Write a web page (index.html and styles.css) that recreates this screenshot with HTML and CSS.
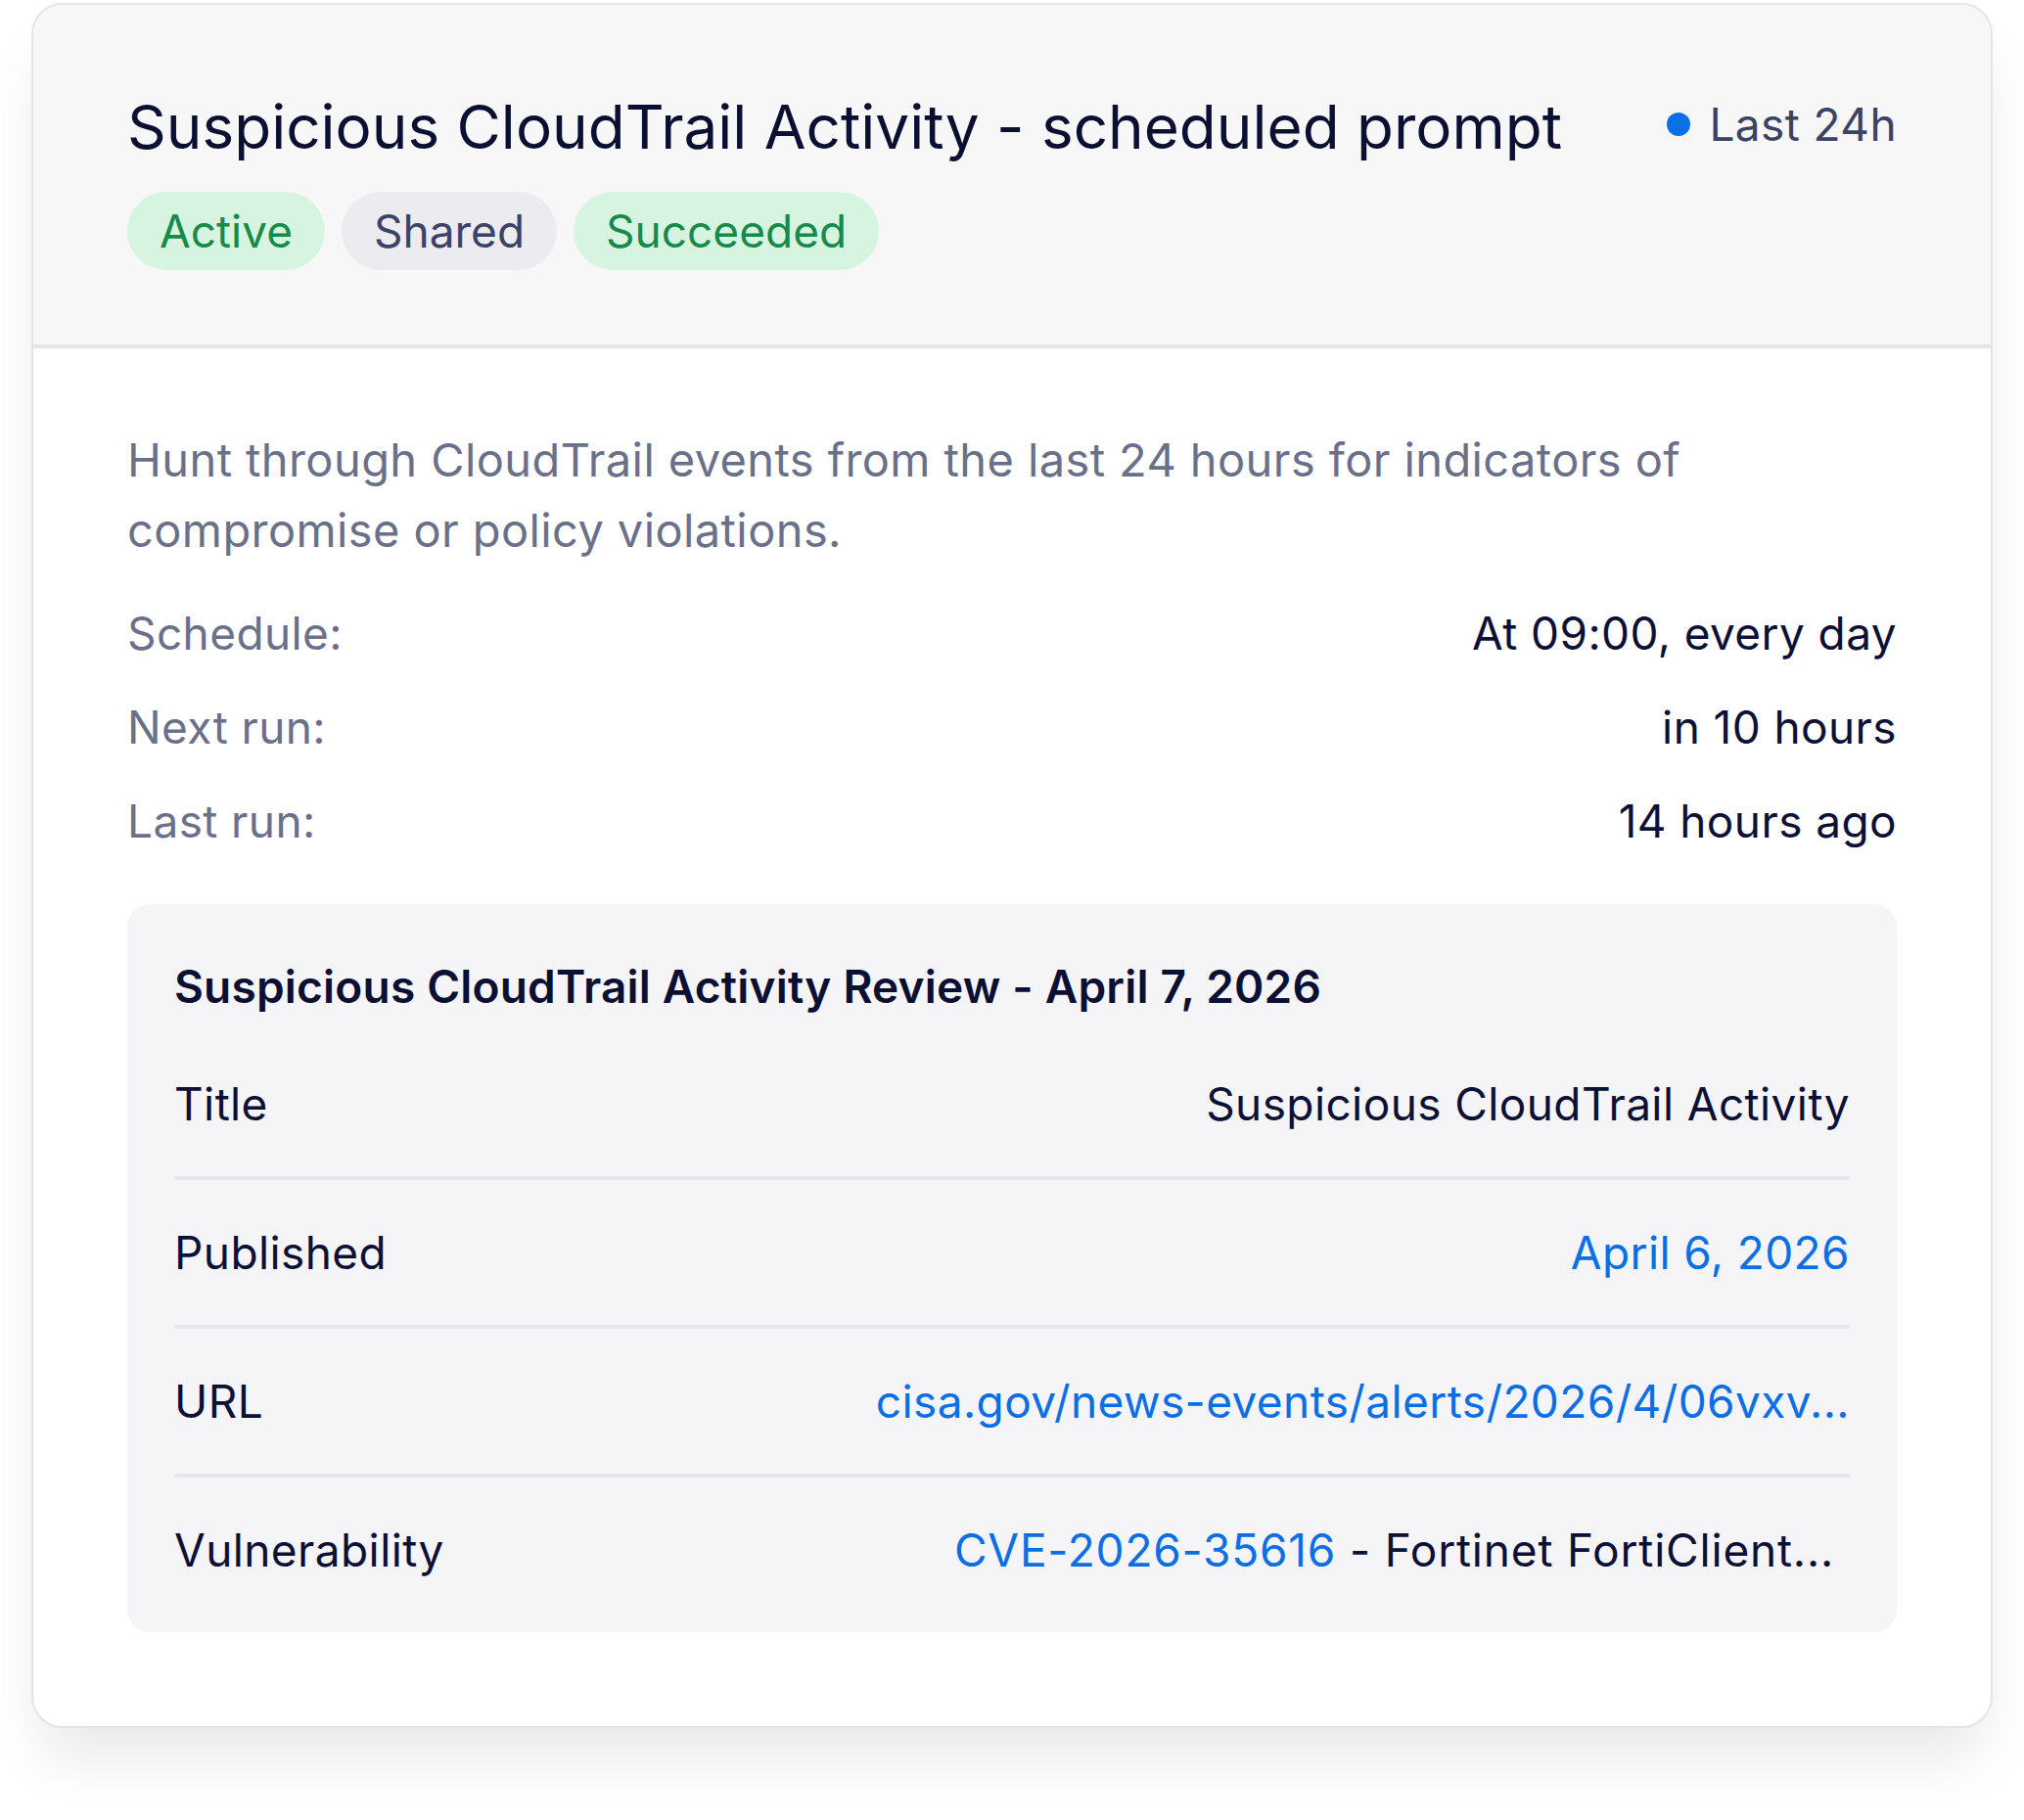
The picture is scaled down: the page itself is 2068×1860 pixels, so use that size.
FILE: index.html
```html
<!DOCTYPE html>
<html lang="en">
<head>
<meta charset="utf-8">
<title>Scheduled prompt</title>
<link rel="stylesheet" href="styles.css">
</head>
<body>
<div class="page">
<div class="card">
  <div class="card-header">
    <div class="title-row">
      <h1 class="title">Suspicious CloudTrail Activity - scheduled prompt</h1>
      <div class="range"><span class="dot"></span><span>Last 24h</span></div>
    </div>
    <div class="badges">
      <span class="badge badge-green">Active</span>
      <span class="badge badge-gray">Shared</span>
      <span class="badge badge-green">Succeeded</span>
    </div>
  </div>
  <div class="card-body">
    <p class="desc">Hunt through CloudTrail events from the last 24 hours for indicators of compromise or policy violations.</p>
    <div class="meta">
      <div class="meta-row"><span class="meta-label">Schedule:</span><span class="meta-value">At 09:00, every day</span></div>
      <div class="meta-row"><span class="meta-label">Next run:</span><span class="meta-value">in 10 hours</span></div>
      <div class="meta-row"><span class="meta-label">Last run:</span><span class="meta-value">14 hours ago</span></div>
    </div>
    <div class="result">
      <div class="result-title">Suspicious CloudTrail Activity Review - April 7, 2026</div>
      <div class="result-row"><span class="r-label">Title</span><span class="r-value">Suspicious CloudTrail Activity</span></div>
      <div class="result-row"><span class="r-label">Published</span><span class="r-value link">April 6, 2026</span></div>
      <div class="result-row"><span class="r-label">URL</span><span class="r-value link">cisa.gov/news-events/alerts/2026/4/06vxv...</span></div>
      <div class="result-row"><span class="r-label">Vulnerability</span><span class="r-value trunc"><span class="link">CVE-2026-35616</span> - Fortinet FortiClient...</span></div>
    </div>
  </div>
</div>
</div>
</body>
</html>
```

FILE: styles.css
```css
* { box-sizing: border-box; }

html, body {
  margin: 0;
  background: #ffffff;
}

body {
  font-family: Inter, "Noto Sans", "Liberation Sans", sans-serif;
  color: #0c1034;
}

.page {
  padding: 3px 0 96px 32px;
  min-height: 1860px;
}

.card {
  width: 2004px;
  border: 2px solid #e3e3e8;
  border-radius: 32px;
  background: #ffffff;
  overflow: hidden;
  box-shadow: 0 40px 60px -12px rgba(16, 20, 40, 0.10);
}

.card-header {
  background: #f7f7f8;
  padding: 85px 96px 76px;
  border-bottom: 4px solid #e4e4ea;
}

.title-row {
  display: flex;
  align-items: center;
  justify-content: space-between;
}

.title {
  margin: 0;
  font-size: 62px;
  line-height: 80px;
  font-weight: 400;
  color: #0b1033;
}

.range {
  display: flex;
  align-items: center;
  gap: 19px;
  font-size: 46px;
  line-height: 66px;
  letter-spacing: 0.4px;
  color: #3b4264;
  margin-top: -6px;
}

.dot {
  width: 24px;
  height: 24px;
  border-radius: 50%;
  background: #0b6fe8;
}

.badges {
  display: flex;
  gap: 17px;
  margin-top: 26px;
}

.badge {
  height: 80px;
  line-height: 80px;
  padding: 0 33px;
  border-radius: 40px;
  font-size: 46px;
}

.badge-green {
  background: #d7f4e1;
  color: #168a4a;
}

.badge-gray {
  background: #ebebf0;
  color: #3c4366;
}

.card-body {
  padding: 78px 96px 96px;
}

.desc {
  margin: 0;
  font-size: 47px;
  line-height: 72px;
  letter-spacing: 0.4px;
  color: #6b7089;
}

.meta {
  display: flex;
  flex-direction: column;
  gap: 24px;
  margin-top: 33px;
}

.meta-row {
  display: flex;
  justify-content: space-between;
  font-size: 46px;
  line-height: 72px;
  letter-spacing: 0.4px;
}

.meta-label { color: #6b7089; }
.meta-value { color: #0c1034; }

.result {
  margin-top: 49px;
  background: #f5f5f8;
  border-radius: 24px;
  padding: 51px 48px 50px;
}

.result-title {
  font-size: 46px;
  line-height: 66px;
  font-weight: 600;
  letter-spacing: 0.2px;
  color: #0b1033;
  margin-bottom: 13px;
}

.result-row {
  display: flex;
  justify-content: space-between;
  font-size: 46px;
  line-height: 68px;
  letter-spacing: 0.4px;
  padding: 40px 0;
  border-bottom: 4px solid #e6e6ec;
}

.result-row:last-child {
  border-bottom: none;
  padding-bottom: 0;
}

.r-label { color: #0c1034; }
.r-value { color: #0c1034; }
.link { color: #0b6fe4; }
.trunc { padding-right: 16px; letter-spacing: 0.8px; }
```
